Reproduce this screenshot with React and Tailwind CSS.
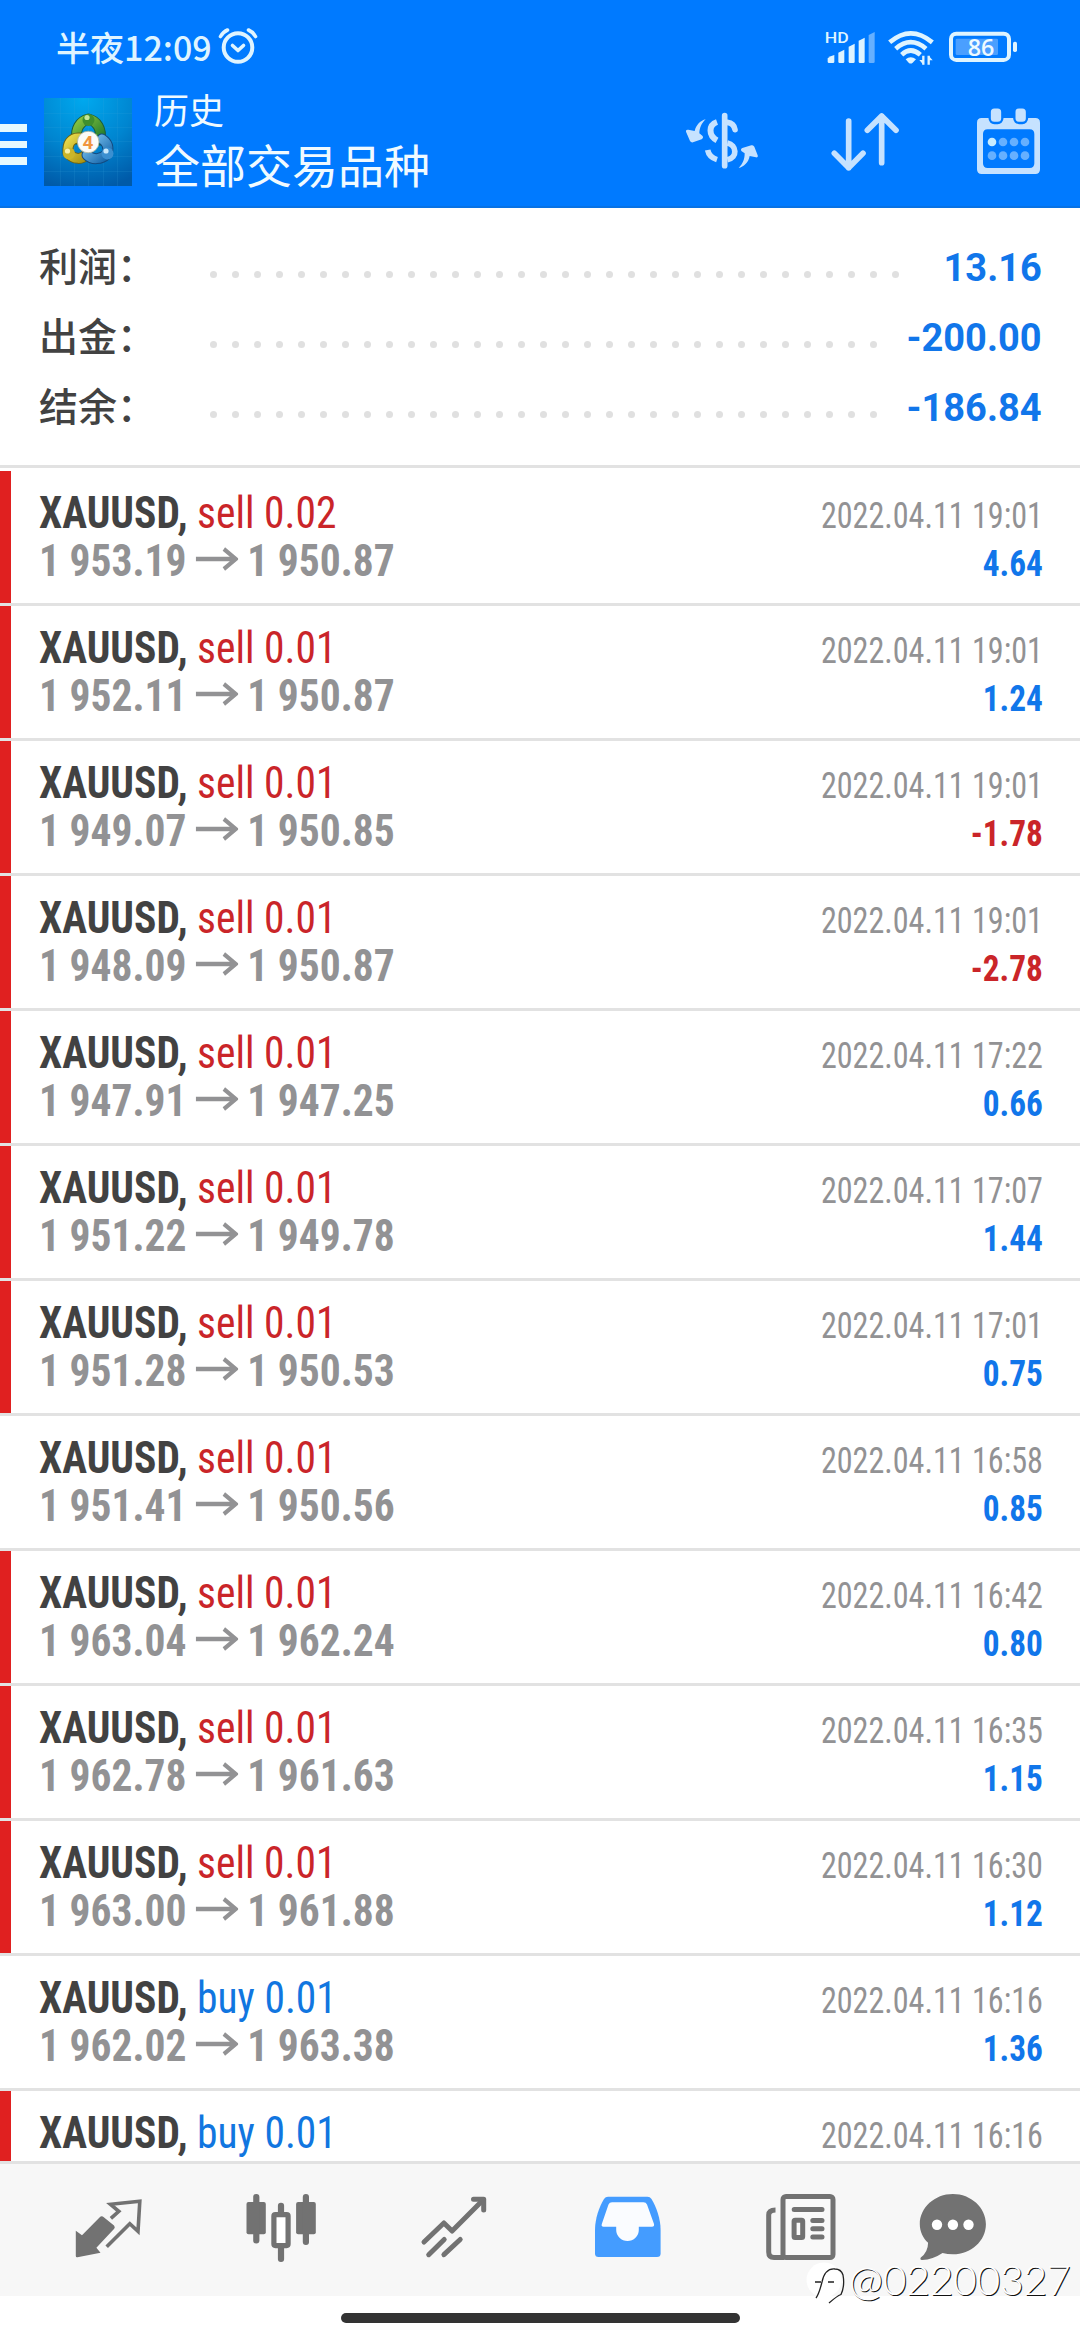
import React from 'react'
import clsx from 'clsx'

const summary = [
  { label: '利润：', value: '13.16', dots: 32 },
  { label: '出金：', value: '-200.00', dots: 31 },
  { label: '结余：', value: '-186.84', dots: 31 },
]

const deals = [
  { side: 'sell', lots: '0.02', open: '1 953.19', close: '1 950.87', time: '2022.04.11 19:01', profit: '4.64', marked: true },
  { side: 'sell', lots: '0.01', open: '1 952.11', close: '1 950.87', time: '2022.04.11 19:01', profit: '1.24', marked: true },
  { side: 'sell', lots: '0.01', open: '1 949.07', close: '1 950.85', time: '2022.04.11 19:01', profit: '-1.78', marked: true },
  { side: 'sell', lots: '0.01', open: '1 948.09', close: '1 950.87', time: '2022.04.11 19:01', profit: '-2.78', marked: true },
  { side: 'sell', lots: '0.01', open: '1 947.91', close: '1 947.25', time: '2022.04.11 17:22', profit: '0.66', marked: true },
  { side: 'sell', lots: '0.01', open: '1 951.22', close: '1 949.78', time: '2022.04.11 17:07', profit: '1.44', marked: true },
  { side: 'sell', lots: '0.01', open: '1 951.28', close: '1 950.53', time: '2022.04.11 17:01', profit: '0.75', marked: true },
  { side: 'sell', lots: '0.01', open: '1 951.41', close: '1 950.56', time: '2022.04.11 16:58', profit: '0.85', marked: false },
  { side: 'sell', lots: '0.01', open: '1 963.04', close: '1 962.24', time: '2022.04.11 16:42', profit: '0.80', marked: true },
  { side: 'sell', lots: '0.01', open: '1 962.78', close: '1 961.63', time: '2022.04.11 16:35', profit: '1.15', marked: true },
  { side: 'sell', lots: '0.01', open: '1 963.00', close: '1 961.88', time: '2022.04.11 16:30', profit: '1.12', marked: true },
  { side: 'buy', lots: '0.01', open: '1 962.02', close: '1 963.38', time: '2022.04.11 16:16', profit: '1.36', marked: false },
  { side: 'buy', lots: '0.01', open: '', close: '', time: '2022.04.11 16:16', profit: '', marked: true },
]

function AlarmIcon() {
  return (
    <svg width="40" height="38" viewBox="0 0 40 38" fill="none" stroke="#dff4ff" strokeWidth="4" strokeLinecap="round" strokeLinejoin="round">
      <circle cx="20" cy="20.5" r="14.3" />
      <path d="M14.5 18.5l5.5 5 5.5-5" strokeWidth="3.6" />
      <path d="M2.5 9.5Q5 5 9.5 3M37.5 9.5Q35 5 30.5 3" strokeWidth="3.6" />
    </svg>
  )
}

function SignalIcon() {
  return (
    <svg width="50" height="36" viewBox="555 90 150 108" fill="#dff4ff">
      <text x="554" y="129" fontSize="46" fontWeight="500" textLength="72" lengthAdjust="spacingAndGlyphs" fontFamily="Roboto, sans-serif">HD</text>
      <path d="M563 175q8-8 20-10v20q0 4-4 4h-12q-4 0-4-4z" />
      <path d="M595 158l18-9v36q0 4-4 4h-10q-4 0-4-4z" />
      <path d="M626 140l18-9v54q0 4-4 4h-10q-4 0-4-4z" />
      <path d="M656 122l18-9v72q0 4-4 4h-10q-4 0-4-4z" />
      <path d="M686 105l18-9v89q0 4-4 4h-10q-4 0-4-4z" fill="#66b0ff" />
    </svg>
  )
}

function WifiIcon() {
  return (
    <svg width="46" height="36" viewBox="744 90 138 108" fill="none" stroke="#dff4ff" strokeWidth="14">
      <path d="M749 127Q812 73 877 127" />
      <path d="M767 146Q812 107 858 146" />
      <path d="M785 164Q812 139 841 164" />
      <path d="M797 178Q812 166 828 178L818 188Q812 193 806 188z" fill="#dff4ff" stroke="none" />
      <path d="M850 167v27M866 194v-27" strokeWidth="7" />
      <path d="M838 180l12 14v-14zM878 181l-12-14v14z" fill="#dff4ff" stroke="none" />
    </svg>
  )
}

function BatteryIcon() {
  return (
    <svg width="69" height="36" viewBox="927 90 207 108">
      <rect x="933" y="101" width="174" height="79" rx="16" fill="none" stroke="#dff4ff" strokeWidth="12" />
      <rect x="947" y="116" width="127" height="49" rx="4" fill="#4a9fff" />
      <rect x="1119" y="125" width="12" height="31" rx="5" fill="#dff4ff" />
      <text x="983" y="167" fontSize="68" fontWeight="600" textLength="80" lengthAdjust="spacingAndGlyphs" fill="#eefaff" fontFamily="'Open Sans', sans-serif">86</text>
    </svg>
  )
}

function LogoIcon() {
  return (
    <svg width="88" height="88" viewBox="0 0 88 88">
      <defs>
        <radialGradient id="bg" cx="0.45" cy="0" r="1.05">
          <stop offset="0" stopColor="#00a9ef" />
          <stop offset="0.55" stopColor="#0085d0" />
          <stop offset="1" stopColor="#005aa8" />
        </radialGradient>
        <linearGradient id="green" x1="0" y1="0" x2="1" y2="1">
          <stop offset="0" stopColor="#8cc63f" />
          <stop offset="1" stopColor="#1f7a2c" />
        </linearGradient>
        <linearGradient id="yellow" x1="0" y1="0" x2="1" y2="1">
          <stop offset="0" stopColor="#e8d94a" />
          <stop offset="1" stopColor="#a99312" />
        </linearGradient>
        <linearGradient id="blue" x1="0" y1="0" x2="1" y2="1">
          <stop offset="0" stopColor="#7cc4f0" />
          <stop offset="1" stopColor="#1767ac" />
        </linearGradient>
      </defs>
      <rect width="88" height="88" fill="url(#bg)" />
      <path d="M0 15.5h88M0 29.5h88M0 43.5h88M0 58.5h88M0 73.5h88M16.5 0v88M30.5 0v88M44.5 0v88M59.500 0v88M73.5 0v88" stroke="#3fa9e0" strokeOpacity="0.15" />
      <g strokeLinecap="round" strokeLinejoin="round">
        <path d="M33 41C31 31 36 23 44.500 21C53 23 58 31 56 42" fill="none" stroke="#1c5c3a" strokeWidth="11" />
        <path d="M33 41C31 31 36 23 44.500 21C53 23 58 31 56 42" fill="none" stroke="url(#green)" strokeWidth="9" />
        <path d="M36 40C27 39 23 46 24 55C30 62 38 62 43 56" fill="none" stroke="#6c6414" strokeWidth="11" />
        <path d="M36 40C27 39 23 46 24 55C30 62 38 62 43 56" fill="none" stroke="url(#yellow)" strokeWidth="9" />
        <path d="M58 41C64 45 65 50 63 56C57 62 48 62 43 57" fill="none" stroke="#124a80" strokeWidth="11" />
        <path d="M58 41C64 45 65 50 63 56C57 62 48 62 43 57" fill="none" stroke="url(#blue)" strokeWidth="9" />
      </g>
      <circle cx="44.500" cy="22" r="6" fill="#3f8f2e" />
      <circle cx="43" cy="19.500" r="2.600" fill="#c4e69a" />
      <circle cx="25" cy="55.500" r="6" fill="#c9b52a" />
      <circle cx="23.500" cy="53" r="2.600" fill="#f7f0a8" />
      <circle cx="63.500" cy="55.500" r="6" fill="#3b8fd0" />
      <circle cx="62" cy="53" r="2.600" fill="#c8e8fb" />
      <circle cx="44.200" cy="44" r="10.800" fill="#fbfbf8" stroke="#a8b39c" strokeWidth="0.800" />
      <text x="44" y="51" textAnchor="middle" fontSize="19" fontWeight="700" fill="#f0953f" fontFamily="Roboto, sans-serif">4</text>
    </svg>
  )
}

function CurrencyIcon() {
  return (
    <svg width="72" height="70" viewBox="138 320 216 210" fill="none" stroke="#c6e2ff" strokeWidth="17">
      <path d="M254 346v150" strokeWidth="17" strokeLinecap="round" />
      <path d="M231 365C205 374 205 406 231 420" strokeWidth="18" />
      <path d="M203 449C206 464 215 473 231 478" />
      <path d="M262 366Q282 368 285 388" strokeLinecap="round" />
      <path d="M262 428C290 434 294 472 262 478" />
      <path d="M197 357C182 361 169 372 164 392L145 388Q137 387 138 394L150 422Q153 427 159 426L185 417Q192 412 187 406L178 399C179 382 184 370 197 357z" fill="#c6e2ff" stroke="none" />
      <path d="M296 503C311 499 325 488 329 467L348 471Q355 472 353 465L343 439Q340 433 334 435L307 443Q300 447 305 453L314 459C314 478 308 490 296 503z" fill="#c6e2ff" stroke="none" />
    </svg>
  )
}

function SortIcon() {
  return (
    <svg width="70" height="70" viewBox="570 320 210 210" fill="none" stroke="#c6e2ff" strokeWidth="17" strokeLinecap="round" strokeLinejoin="round">
      <path d="M626 362v140M583 459l43 43 43-43" />
      <path d="M725 487V347M682 390l43-43 43 43" />
    </svg>
  )
}

function CalendarIcon() {
  return (
    <svg width="63" height="70" viewBox="1011 320 189 210">
      <path fillRule="evenodd" fill="#c6e2ff" d="M1025 353h161q14 0 14 14v140q0 14-14 14h-161q-14 0-14-14v-140q0-14 14-14zM1043 387q-14 0-14 14v88q0 14 14 14h126q14 0 14-14v-88q0-14-14-14z" />
      <rect x="1049" y="321" width="38" height="47" rx="14" fill="#c6e2ff" stroke="#007aff" strokeWidth="7" />
      <rect x="1123" y="321" width="38" height="47" rx="14" fill="#c6e2ff" stroke="#007aff" strokeWidth="7" />
      <g fill="#66b0ff">
        <circle cx="1056" cy="425" r="13" fill="#c8ecff" />
        <circle cx="1089" cy="425" r="13" />
        <circle cx="1122" cy="425" r="13" />
        <circle cx="1155" cy="425" r="13" />
        <circle cx="1056" cy="466" r="13" />
        <circle cx="1089" cy="466" r="13" />
        <circle cx="1122" cy="466" r="13" />
        <circle cx="1155" cy="466" r="13" />
      </g>
    </svg>
  )
}

function Header() {
  return (
    <header className="h-[208px] bg-[#007aff] border-b-2 border-[#0872e4] text-[#f0faff] flex flex-col">
      <div className="h-[94px] pl-14 pr-[62px] flex justify-between items-start">
        <div className="flex items-start pt-[27px] gap-[6px]">
          <span className="text-[34px] leading-[40px] font-medium text-[#dff4ff]">半夜12:09</span>
          <AlarmIcon />
        </div>
        <div className="flex items-start pt-[30px]">
          <SignalIcon />
          <span className="w-[13px]" />
          <WifiIcon />
          <span className="w-[15px]" />
          <BatteryIcon />
        </div>
      </div>
      <div className="flex items-start pr-10">
        <div className="w-[27px] mt-[30px] flex flex-col gap-[9px]">
          <span className="h-[7.500px] bg-[#e6f9ff]" />
          <span className="h-[7.500px] bg-[#e6f9ff]" />
          <span className="h-[7.500px] bg-[#e6f9ff]" />
        </div>
        <div className="ml-[17px] mt-1">
          <LogoIcon />
        </div>
        <div className="ml-[22px] flex-1 flex flex-col">
          <span className="text-[35px] leading-[36px] -mt-[3px]">历史</span>
          <span className="text-[46px] leading-[48px] mt-3">全部交易品种</span>
        </div>
        <div className="flex items-start mt-[12.600px]">
          <CurrencyIcon />
          <span className="w-[72px]" />
          <SortIcon />
          <span className="w-[77px]" />
          <CalendarIcon />
        </div>
      </div>
    </header>
  )
}

function Summary() {
  return (
    <section className="h-[260px] pt-[23px] pl-[39px] pr-[38px] border-b-[3px] border-[#e2e2e2]">
      {summary.map((item) => (
        <div key={item.label} className="h-[70px] flex items-start">
          <span className="w-[171px] text-[39px] leading-[66px] font-medium text-[#424242]">{item.label}</span>
          <span className="flex gap-[15px] pt-[40px]">
            {Array.from({ length: item.dots }, (_, i) => (
              <span key={i} className="size-[7px] rounded-full bg-[#e0e0e0]" />
            ))}
          </span>
          <span className="ml-auto font-['Roboto'] text-[39px] leading-[74px] font-bold text-[#1176ea] origin-right scale-x-[0.975]">{item.value}</span>
        </div>
      ))}
    </section>
  )
}

function PriceArrow() {
  return (
    <svg width="46" height="24" viewBox="0 0 46 24" fill="none" stroke="#929294" strokeWidth="4.300" className="ml-[10px] mr-[10px] mb-1">
      <path d="M0 12h43M30.500 2l13 10-13 10" />
    </svg>
  )
}

function Deal({ deal }) {
  const isLoss = deal.profit.startsWith('-')
  return (
    <li className="h-[135px] shrink-0 flex border-b-[3px] border-[#e2e2e2]">
      <span className={clsx('w-[11px]', deal.marked && 'bg-[#e02020]')} />
      <div className="flex-1 pt-[18px] pl-7 pr-[37px] flex justify-between whitespace-nowrap font-['Roboto_Condensed','Roboto'] [font-stretch:75%]">
        <div className="origin-left scale-x-[0.922] text-[45px] leading-[48px]">
          <div>
            <span className="font-bold text-[#424242]">XAUUSD,</span>{' '}
            <span className={deal.side === 'sell' ? 'text-[#ca2529]' : 'text-[#1176e0]'}>
              {deal.side} {deal.lots}
            </span>
          </div>
          {deal.open && (
            <div className="flex items-center font-bold text-[#929294]">
              {deal.open}
              <PriceArrow />
              {deal.close}
            </div>
          )}
        </div>
        <div className="pt-[3px] text-right text-[36px] leading-[48px]">
          <div className="origin-right scale-x-[0.892] text-[#929294]">{deal.time}</div>
          <div className={clsx('origin-right scale-x-[0.925] font-bold', isLoss ? 'text-[#ca2529]' : 'text-[#1176ea]')}>
            {deal.profit}
          </div>
        </div>
      </div>
    </li>
  )
}

function QuotesIcon() {
  return (
    <svg width="70" height="72" viewBox="0 0 70 72" fill="none" stroke="#727272">
      <path d="M1.800 38.700L8 43.300 25.500 25.500Q27.600 23.300 29.800 25.300L40 33.500Q41.500 35.200 40.200 36.800L22.400 55.700 26.500 60.700 3.500 65.200Q1.800 65.500 1.800 64z" fill="#727272" stroke="none" />
      <path d="M36.900 26.300L44.800 19.300 36.500 12.300 65.800 9.300 64 39.300 55.800 31.700 32.700 54.700" strokeWidth="3.600" />
    </svg>
  )
}

function ChartIcon() {
  return (
    <svg width="74" height="72" viewBox="0 0 74 72" fill="#727272">
      <rect x="2.500" y="10" width="19.300" height="32.300" rx="2" />
      <rect x="9.200" y="2" width="6.200" height="49.500" rx="3" />
      <rect x="52.100" y="10" width="19.700" height="32.300" rx="2" />
      <rect x="58.800" y="2" width="6.200" height="51" rx="3" />
      <rect x="33.900" y="10.700" width="6.200" height="14" rx="3" />
      <rect x="33.900" y="52" width="6.200" height="18" rx="3" />
      <rect x="29.900" y="22.600" width="14.200" height="31" rx="1.500" fill="#fff" stroke="#727272" strokeWidth="5.200" />
    </svg>
  )
}

function TradeIcon() {
  return (
    <svg width="70" height="72" viewBox="0 0 70 72" fill="none" stroke="#727272" strokeWidth="5" strokeLinecap="round" strokeLinejoin="round">
      <path d="M4 50L23.900 31 32.100 39 63.500 7.600" />
      <path d="M53.500 7.300H63.700V18" />
      <path d="M8.700 62.700L24.200 47.500M23.900 62.700L40.200 47.500" />
    </svg>
  )
}

function HistoryIcon() {
  return (
    <svg width="68" height="72" viewBox="0 0 68 72">
      <path fillRule="evenodd" fill="#449cff" d="M14 4.700H53.500Q56 4.700 57.500 7C62.500 15 66.600 27 66.600 38V61.500Q66.600 65 63 65H4.600Q1 65 1 61.500V38C1 27 5 15 10 7Q11.500 4.700 14 4.700z" />
      <path fill="#fafcff" d="M18 10.300H49.500Q52 10.300 53 12.600L60 32Q60.600 34.700 58 34.700H44.800V38A11.300 11 0 0 1 22.200 38V34.700H9.500Q7 34.700 7.800 32L14.500 12.600Q15.500 10.300 18 10.300z" />
    </svg>
  )
}

function NewsIcon() {
  return (
    <svg width="70" height="72" viewBox="0 0 70 72" fill="none" stroke="#727272" strokeWidth="5" strokeLinecap="round">
      <rect x="17" y="4.500" width="50" height="61" rx="3" fill="#f9f9f9" />
      <path d="M9.500 18Q2.700 18 2.700 23V60Q2.700 65.500 8 65.500H18" strokeLinecap="butt" />
      <path d="M28.200 17.400H56M46.800 28.400H56M46.800 36.700H56M46.800 45H56" />
      <rect x="28.100" y="28.200" width="8.600" height="17.300" rx="1" />
    </svg>
  )
}

function ChatIcon() {
  return (
    <svg width="68" height="72" viewBox="0 0 68 72" fill="#727272">
      <path d="M33.900 2C52 2 66.900 15.500 66.900 32.200S52 62.300 33.900 62.300Q28.500 62.300 23.500 61Q14 67.500 3 68Q.500 67.500 1.800 65.500Q9 60 9.100 50.700C4 46 .8 39.500 .8 32.200C.8 15.500 15.700 2 33.900 2z" />
      <g fill="#fff">
        <circle cx="18" cy="32.700" r="5.200" />
        <circle cx="33.900" cy="32.700" r="5.200" />
        <circle cx="49.500" cy="32.700" r="5.200" />
      </g>
    </svg>
  )
}

function TabBar() {
  return (
    <nav className="h-[135px] shrink-0 bg-[#f7f7f7] border-t-[3px] border-[#e2e2e2] pt-7 pl-[74px] flex items-start">
      <QuotesIcon />
      <span className="w-[100px]" />
      <ChartIcon />
      <span className="w-[102px]" />
      <TradeIcon />
      <span className="w-[104px]" />
      <HistoryIcon />
      <span className="w-[104px]" />
      <NewsIcon />
      <span className="w-[83px]" />
      <ChatIcon />
    </nav>
  )
}

function Watermark() {
  return (
    <div className="absolute left-[806px] top-[2256px] flex items-center">
      <svg width="42" height="48" viewBox="0 0 42 48">
        <circle cx="18" cy="24" r="17.500" fill="#fff" />
        <path d="M23 47Q31 40 35 38.500Q39 30 37 19Q35 13 29 13Q19 12 16 26Q13 38 10 42M9 26H15M22 26H28" fill="none" stroke="#222" strokeWidth="1.300" />
      </svg>
      <span className="ml-[1px] font-['Lato'] font-light text-[41px] leading-[48px] tracking-[-0.3px] text-white [text-shadow:1px_1px_0_#111]">@02200327</span>
    </div>
  )
}

export default function App() {
  return (
    <div className="relative w-[1080px] h-[2340px] bg-white overflow-hidden flex flex-col font-['Noto_Sans_CJK_SC',sans-serif]">
      <Header />
      <Summary />
      <ul className="pt-[3px] h-[1693px] shrink-0 overflow-hidden flex flex-col">
        {deals.map((deal, i) => (
          <Deal key={i} deal={deal} />
        ))}
      </ul>
      <TabBar />
      <div className="flex-1 flex justify-center items-start pt-[17px]">
        <span className="w-[399px] h-[10px] rounded-full bg-[#333333]" />
      </div>
      <Watermark />
    </div>
  )
}
